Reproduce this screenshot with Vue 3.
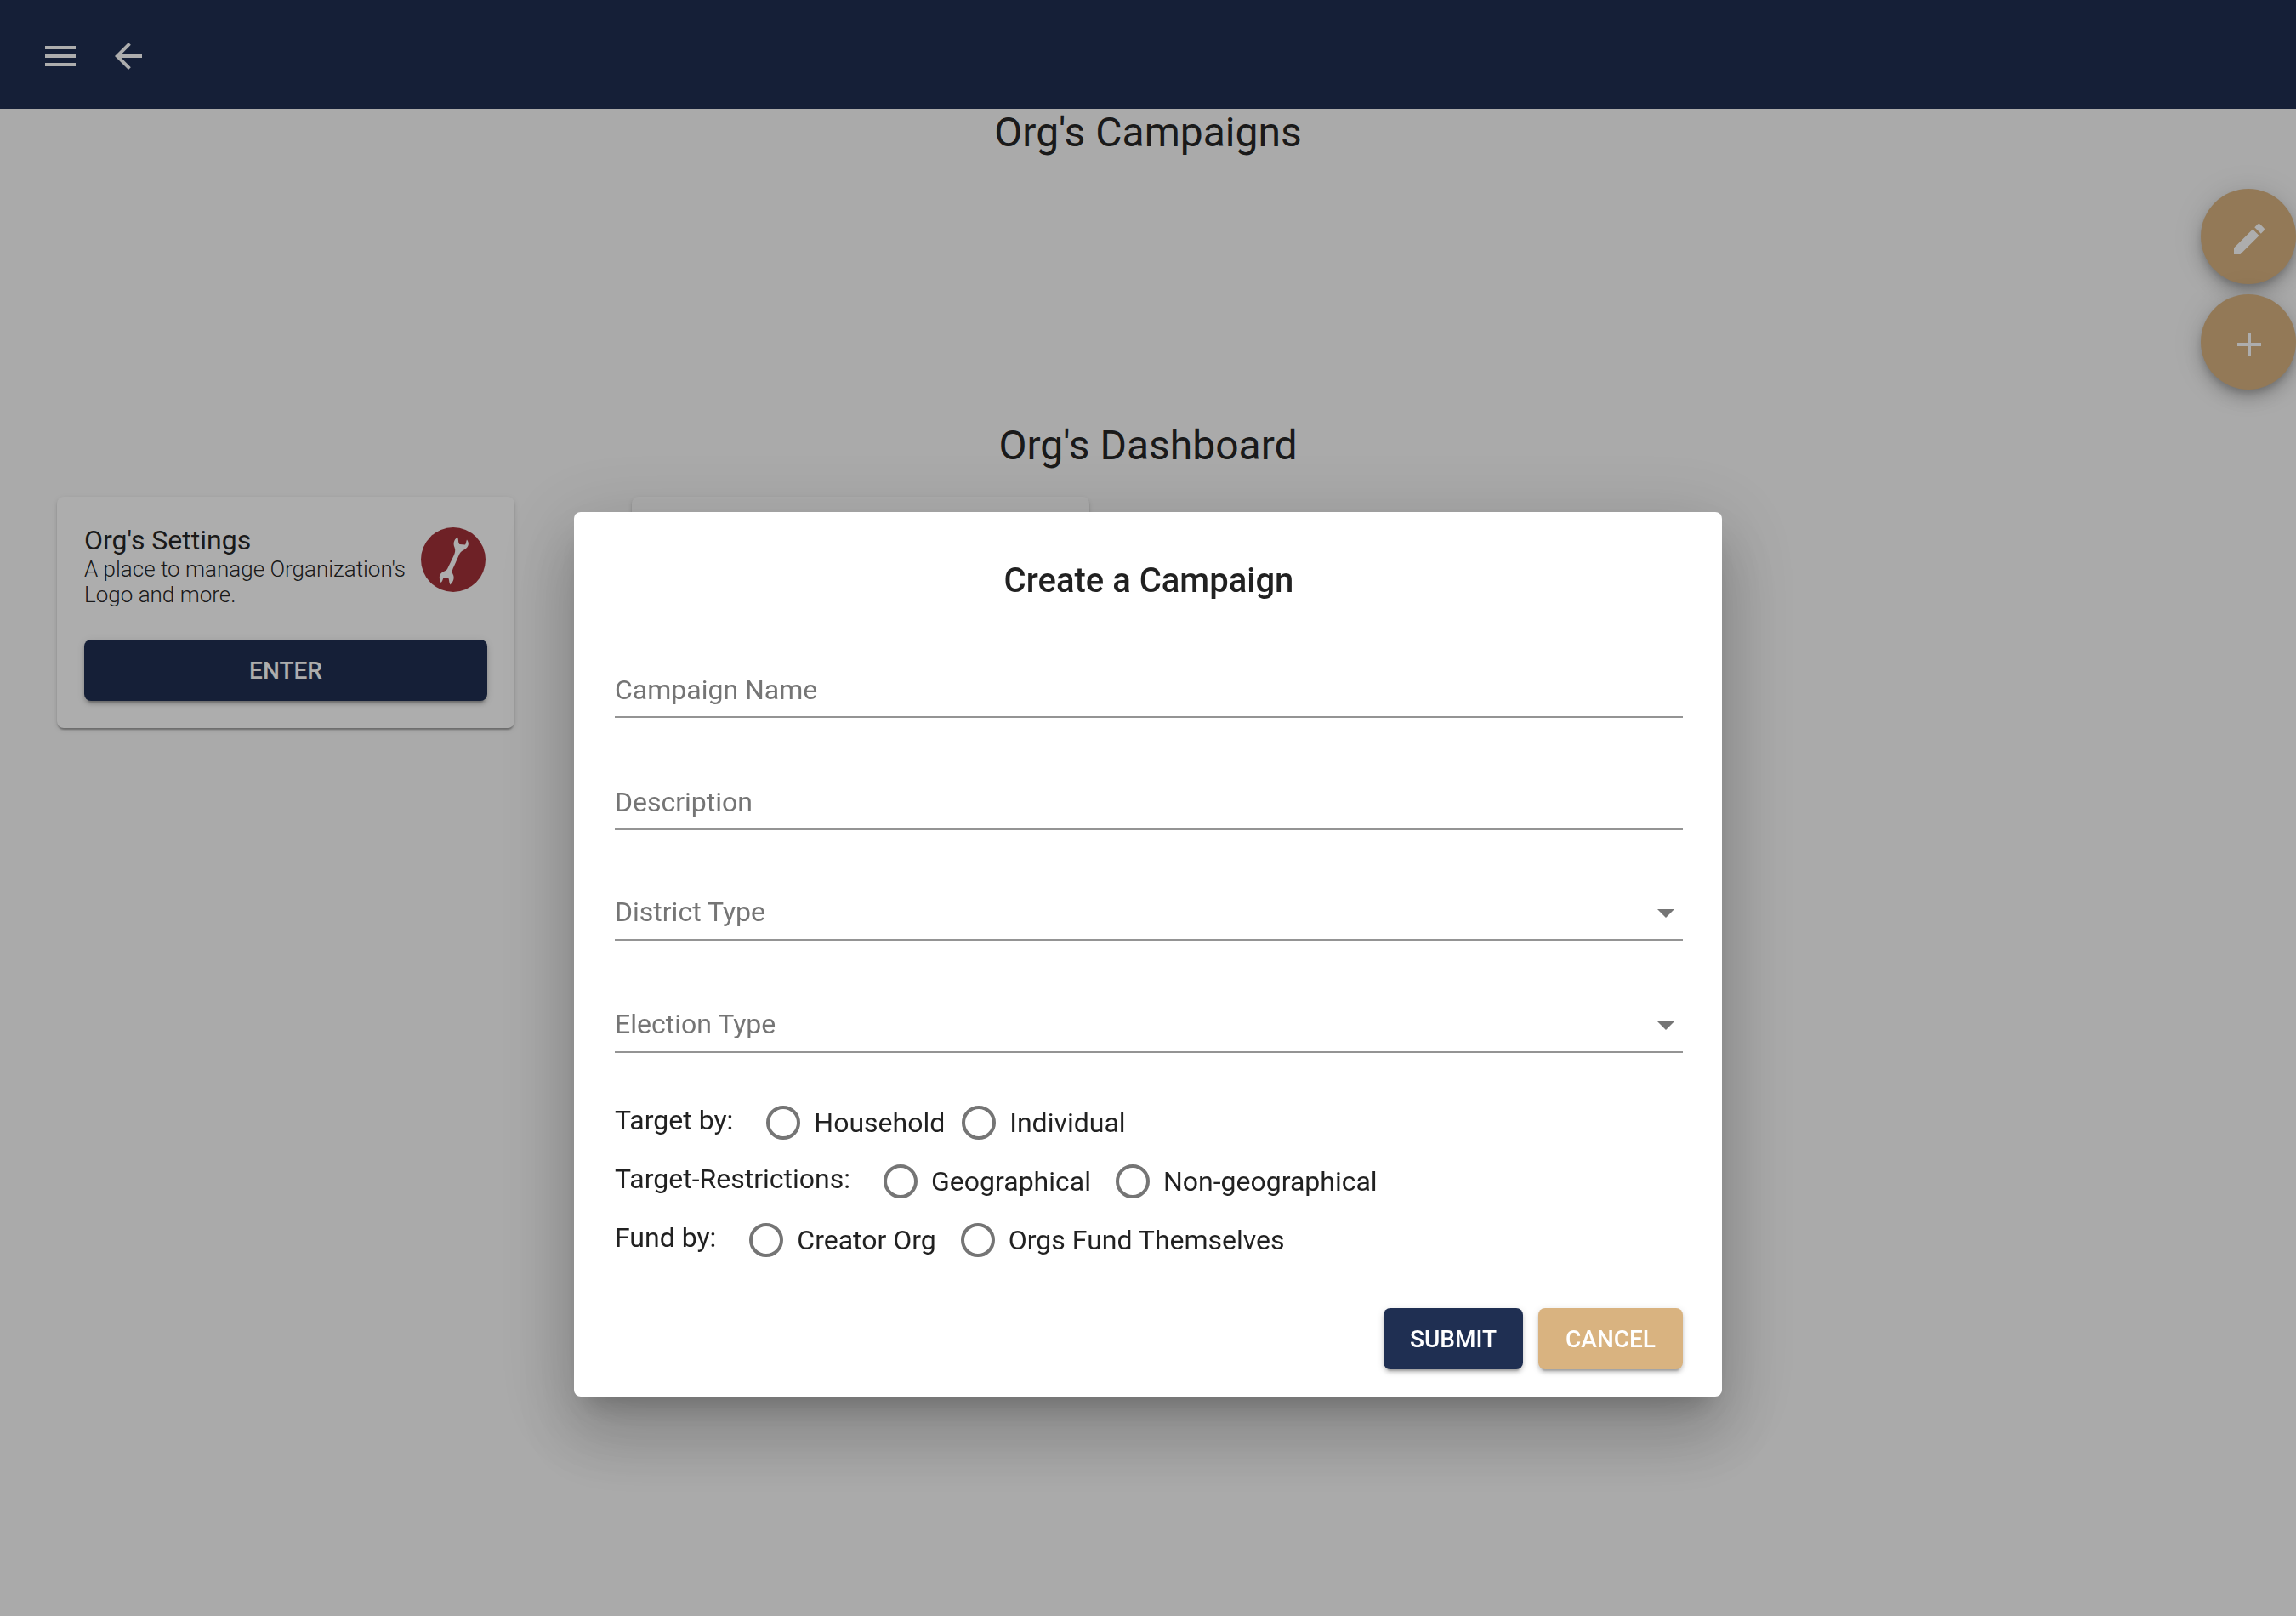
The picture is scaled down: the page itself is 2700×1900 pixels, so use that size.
<script setup>
import { reactive } from 'vue'

const form = reactive({
  name: '',
  description: '',
  district: '',
  election: '',
  target: '',
  restriction: '',
  fund: ''
})

const textFields = [
  { key: 'name', label: 'Campaign Name' },
  { key: 'description', label: 'Description' }
]

const selectFields = [
  { key: 'district', label: 'District Type' },
  { key: 'election', label: 'Election Type' }
]

const choices = [
  { key: 'target', label: 'Target by:', options: ['Household', 'Individual'] },
  { key: 'restriction', label: 'Target-Restrictions:', options: ['Geographical', 'Non-geographical'], wide: true },
  { key: 'fund', label: 'Fund by:', options: ['Creator Org', 'Orgs Fund Themselves'], wide: true }
]
</script>

<template>
  <div class="page">
    <header class="toolbar">
      <button class="icon-button" type="button" aria-label="Menu">
        <svg class="icon" viewBox="0 0 24 24"><path d="M3 18h18v-2H3v2zm0-5h18v-2H3v2zm0-7v2h18V6H3z" /></svg>
      </button>
      <button class="icon-button" type="button" aria-label="Back">
        <svg class="icon" viewBox="0 0 24 24"><path d="M20 11H7.83l5.59-5.59L12 4l-8 8 8 8 1.41-1.41L7.83 13H20v-2z" /></svg>
      </button>
    </header>

    <main>
      <section class="campaigns">
        <h1 class="heading">Org's Campaigns</h1>
      </section>
      <section>
        <h1 class="heading">Org's Dashboard</h1>
        <div class="cards">
          <article class="card">
            <div class="card-head">
              <div>
                <h2 class="card-title">Org's Settings</h2>
                <p class="card-text">A place to manage Organization's Logo and more.</p>
              </div>
              <svg class="badge" viewBox="0 0 76 76" aria-hidden="true">
                <circle cx="38" cy="38" r="38" fill="#a33239" />
                <path fill="#fff" d="M43 11.5C38 15 38 20 39.500 23.500C41 27 40 30 38.500 33.500L31 49C29.500 51.500 27 51.500 25.500 52.500C21 55.500 21 60 23.500 65C25 64 25.500 61.500 26.500 59.500L32.500 60C33.500 62.500 33 65.500 34.500 67.500C39 63 39.500 58.500 37.500 55C36 51.500 37.500 48.500 39 45.500L45.500 31C47 28 49 27.500 51.500 26C56.500 23 57 18.500 54 14.500C53 16.500 53.500 18.500 52 20.500L45.500 20C43.500 18 44.500 14.500 43 11.500Z" />
              </svg>
            </div>
            <button class="button navy" type="button">ENTER</button>
          </article>
          <article class="card"></article>
        </div>
      </section>
    </main>

    <div class="fabs">
      <button class="fab" type="button" aria-label="Edit">
        <svg class="icon" viewBox="0 0 24 24"><path d="M3 17.250V21h3.750L17.810 9.940l-3.750-3.750L3 17.250zM20.710 7.040c.39-.39.39-1.020 0-1.410l-2.340-2.340c-.39-.39-1.020-.39-1.410 0l-1.830 1.830 3.750 3.750 1.830-1.830z" /></svg>
      </button>
      <button class="fab" type="button" aria-label="Add">
        <svg class="icon" viewBox="0 0 24 24"><path d="M19 13h-6v6h-2v-6H5v-2h6V5h2v6h6v2z" /></svg>
      </button>
    </div>

    <div class="overlay">
      <form class="dialog" role="dialog" aria-labelledby="dialog-title" @submit.prevent>
        <h2 id="dialog-title" class="dialog-title">Create a Campaign</h2>

        <div class="fields">
          <div v-for="f in textFields" :key="f.key" class="field">
            <input v-model="form[f.key]" class="control" type="text" :placeholder="f.label" :aria-label="f.label">
          </div>
        </div>
        <div class="fields">
          <div v-for="f in selectFields" :key="f.key" class="field">
            <select v-model="form[f.key]" class="control" :aria-label="f.label">
              <option value="">{{ f.label }}</option>
            </select>
            <svg class="caret" viewBox="0 0 20 10" aria-hidden="true"><path d="M0 0h20L10 10z" /></svg>
          </div>
        </div>

        <div class="choices">
          <div v-for="c in choices" :key="c.key" class="choice" role="radiogroup" :aria-labelledby="'label-' + c.key">
            <span :id="'label-' + c.key" class="choice-label">{{ c.label }}</span>
            <div class="options" :class="{ wide: c.wide }">
              <label v-for="o in c.options" :key="o" class="option">
                <input v-model="form[c.key]" class="radio" type="radio" :name="c.key" :value="o">
                <span>{{ o }}</span>
              </label>
            </div>
          </div>
        </div>

        <div class="actions">
          <button class="button navy" type="submit">SUBMIT</button>
          <button class="button tan" type="button">CANCEL</button>
        </div>
      </form>
    </div>
  </div>
</template>

<style>
body {
  margin: 0;
  background: #fbfbfb;
}
</style>

<style scoped>
.page {
  min-height: 100vh;
  font-family: Roboto, "Liberation Sans", sans-serif;
  color: rgba(0, 0, 0, 0.87);
}

.page * {
  box-sizing: border-box;
}

button,
input,
select {
  font-family: inherit;
}

h1,
h2,
p {
  margin: 0;
}

.toolbar {
  display: flex;
  align-items: center;
  gap: 32px;
  height: 128px;
  padding: 4px 47px 0;
  background: #1f2f52;
}

.icon-button {
  display: flex;
  padding: 0;
  border: 0;
  background: none;
  color: #fff;
}

.icon {
  display: block;
  width: 48px;
  height: 48px;
  fill: currentColor;
}

.campaigns {
  min-height: 368px;
}

.heading {
  font-size: 48px;
  line-height: 56px;
  font-weight: 400;
  text-align: center;
}

.cards {
  display: grid;
  grid-template-columns: repeat(4, 1fr);
  gap: 138px;
  padding: 32px 67px;
}

.card {
  display: flex;
  flex-direction: column;
  min-height: 272px;
  padding: 32px;
  border-radius: 8px;
  background: #fff;
  box-shadow: 0 4px 2px -2px rgba(0, 0, 0, 0.2), 0 2px 2px rgba(0, 0, 0, 0.14), 0 2px 6px rgba(0, 0, 0, 0.12);
}

.card-head {
  display: flex;
  justify-content: space-between;
  flex: 1;
}

.card-title {
  font-size: 32px;
  line-height: 38px;
  font-weight: 400;
}

.card-text {
  font-size: 26px;
  line-height: 30px;
  font-weight: 300;
}

.badge {
  flex: none;
  width: 76px;
  height: 76px;
  margin: 4px 2px 0 0;
}

.button {
  height: 72px;
  padding: 1px 31px 0;
  border: 0;
  border-radius: 8px;
  color: #fff;
  font-size: 28px;
  line-height: 71px;
  font-weight: 500;
  box-shadow: 0 6px 2px -4px rgba(0, 0, 0, 0.2), 0 4px 4px rgba(0, 0, 0, 0.14), 0 2px 10px rgba(0, 0, 0, 0.12);
}

.navy {
  background: #1f2f52;
}

.tan {
  padding: 1px 32px 0;
  background: #d9b380;
}

.fabs {
  position: absolute;
  top: 222px;
  right: 0;
  display: flex;
  flex-direction: column;
  gap: 12px;
}

.fab {
  display: flex;
  align-items: center;
  justify-content: center;
  width: 112px;
  height: 112px;
  padding: 6px 0 0 2px;
  border: 0;
  border-radius: 50%;
  background: #d9b380;
  color: #fff;
  box-shadow: 0 6px 10px -2px rgba(0, 0, 0, 0.2), 0 12px 20px rgba(0, 0, 0, 0.14), 0 2px 36px rgba(0, 0, 0, 0.12);
}

.overlay {
  position: fixed;
  inset: 0;
  display: flex;
  align-items: flex-start;
  justify-content: center;
  padding-top: 602px;
  background: rgba(0, 0, 0, 0.32);
}

.dialog {
  width: 50%;
  padding: 57px 46px 32px;
  padding-left: 48px;
  border-radius: 8px;
  background: #fff;
  box-shadow: 0 22px 30px -14px rgba(0, 0, 0, 0.2), 0 48px 76px 6px rgba(0, 0, 0, 0.14), 0 18px 92px 16px rgba(0, 0, 0, 0.12);
}

.dialog-title {
  margin-bottom: 86px;
  font-size: 40px;
  line-height: 48px;
  font-weight: 500;
  text-align: center;
}

.fields {
  display: flex;
  flex-direction: column;
  gap: 81px;
}

.fields + .fields {
  margin-top: 79px;
}

.field {
  position: relative;
}

.control {
  display: block;
  width: 100%;
  height: 51px;
  padding: 0 0 14px;
  border: 0;
  border-bottom: 2px solid #949494;
  border-radius: 0;
  outline: 0;
  appearance: none;
  background: transparent;
  color: #757575;
  font-size: 32px;
  line-height: 35px;
}

.control::placeholder {
  color: #757575;
  opacity: 1;
}

.caret {
  position: absolute;
  top: 14px;
  right: 10px;
  width: 20px;
  height: 10px;
  fill: #757575;
  pointer-events: none;
}

.choices {
  display: flex;
  flex-direction: column;
  gap: 29px;
  margin-top: 62px;
  font-size: 32px;
  line-height: 40px;
}

.choice {
  display: flex;
  gap: 39px;
}

.choice-label {
  margin-top: -3px;
}

.options {
  display: flex;
  gap: 20px;
}

.wide {
  gap: 29px;
}

.option {
  display: flex;
  gap: 16px;
}

.radio {
  flex: none;
  width: 40px;
  height: 40px;
  margin: 0;
  border: 4px solid #757575;
  border-radius: 50%;
  appearance: none;
}

.radio:checked {
  background: radial-gradient(#1f2f52 50%, transparent 55%);
}

.actions {
  display: flex;
  justify-content: flex-end;
  gap: 18px;
  margin-top: 60px;
}
</style>
